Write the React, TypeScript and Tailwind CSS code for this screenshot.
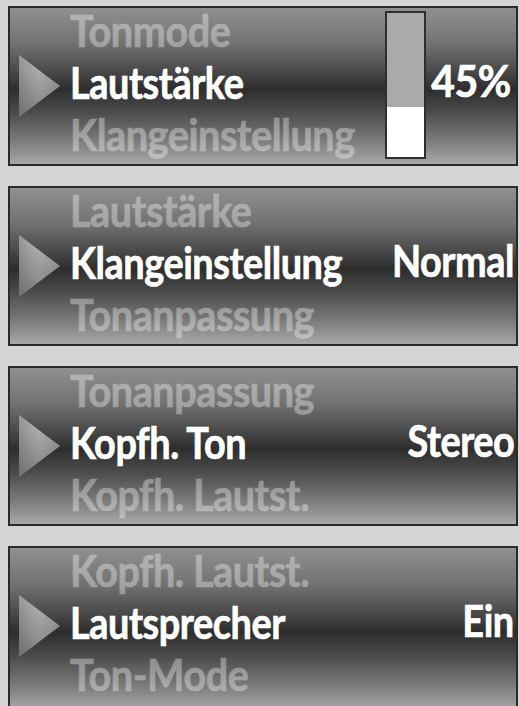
import React from "react";

const panelBg =
  "bg-[linear-gradient(to_bottom,#909090_0%,#737373_22%,#4a4a4a_40%,#2d2d2d_52%,#4a4a4a_66%,#787878_84%,#a8a8a8_100%)]";

function Arrow() {
  return (
    <svg width="44" height="64" viewBox="0 0 44 64">
      <defs>
        <linearGradient id="ag" x1="0" y1="0" x2="0.6" y2="1">
          <stop offset="0" stopColor="#cccccc" />
          <stop offset="0.5" stopColor="#a4a4a4" />
          <stop offset="1" stopColor="#7e7e7e" />
        </linearGradient>
        <linearGradient id="ag2" x1="0" y1="0" x2="1" y2="0">
          <stop offset="0" stopColor="#000" stopOpacity="0.25" />
          <stop offset="0.5" stopColor="#000" stopOpacity="0" />
        </linearGradient>
      </defs>
      <polygon points="2,1 43,32 2,63" fill="url(#ag)" />
      <polygon points="2,1 43,32 2,63" fill="url(#ag2)" />
    </svg>
  );
}

type PanelProps = {
  prev: string;
  cur: string;
  next: string;
  value: string;
  bar?: boolean;
  tall?: boolean;
};

function Label({ text, dim }: { text: string; dim?: boolean }) {
  return (
    <div className="h-[52px] flex items-center whitespace-nowrap text-white">
      {dim ? (
        <span className="inline-block origin-left scale-x-[0.9] opacity-35 [-webkit-text-stroke:0.6px_white]">
          {text}
        </span>
      ) : (
        <span className="inline-block origin-left scale-x-[0.86] [-webkit-text-stroke:0.7px_white]">
          {text}
        </span>
      )}
    </div>
  );
}

function Panel({ prev, cur, next, value, bar, tall }: PanelProps) {
  return (
    <div
      className={`ml-[8px] mr-[2px] ${tall ? "h-[166px]" : "h-[160px]"} shrink-0 border-2 border-[#2a2a2a] ${panelBg} flex flex-row items-start`}
    >
      <div className="w-[60px] h-[156px] flex items-center pl-[7px] shrink-0">
        <Arrow />
      </div>
      <div className="flex-1 flex flex-col min-w-0 -mt-[4px]">
        <Label text={prev} dim />
        <Label text={cur} />
        <Label text={next} dim />
      </div>
      {bar && (
        <div className="h-[156px] flex items-center shrink-0">
          <div className="w-[41px] h-[148px] mt-[-2px] border-2 border-[#2e2e2e] bg-[#aaaaaa] flex flex-col justify-end">
            <div className="h-[50px] bg-white" />
          </div>
        </div>
      )}
      <div
        className={`${bar ? "w-[90px]" : "w-[200px]"} h-[156px] flex items-center justify-end pr-[2px] pb-[12px] shrink-0 text-white whitespace-nowrap`}
      >
        <span
          className={`inline-block origin-right ${bar ? "scale-x-[0.93] pr-[3px]" : "scale-x-[0.86]"} [-webkit-text-stroke:0.7px_white]`}
        >
          {value}
        </span>
      </div>
    </div>
  );
}

export default function App() {
  return (
    <div
      className="w-[520px] h-[706px] overflow-hidden bg-[#d5d5d5] flex flex-col gap-[20px] pt-[6px] text-[44px] font-bold leading-none tracking-[-0.5px]"
      style={{ fontFamily: "Lato, 'Open Sans', sans-serif" }}
    >
      <Panel prev="Tonmode" cur="Lautstärke" next="Klangeinstellung" value="45%" bar />
      <Panel prev="Lautstärke" cur="Klangeinstellung" next="Tonanpassung" value="Normal" />
      <Panel prev="Tonanpassung" cur="Kopfh. Ton" next="Kopfh. Lautst." value="Stereo" />
      <Panel prev="Kopfh. Lautst." cur="Lautsprecher" next="Ton-Mode" value="Ein" tall />
    </div>
  );
}
